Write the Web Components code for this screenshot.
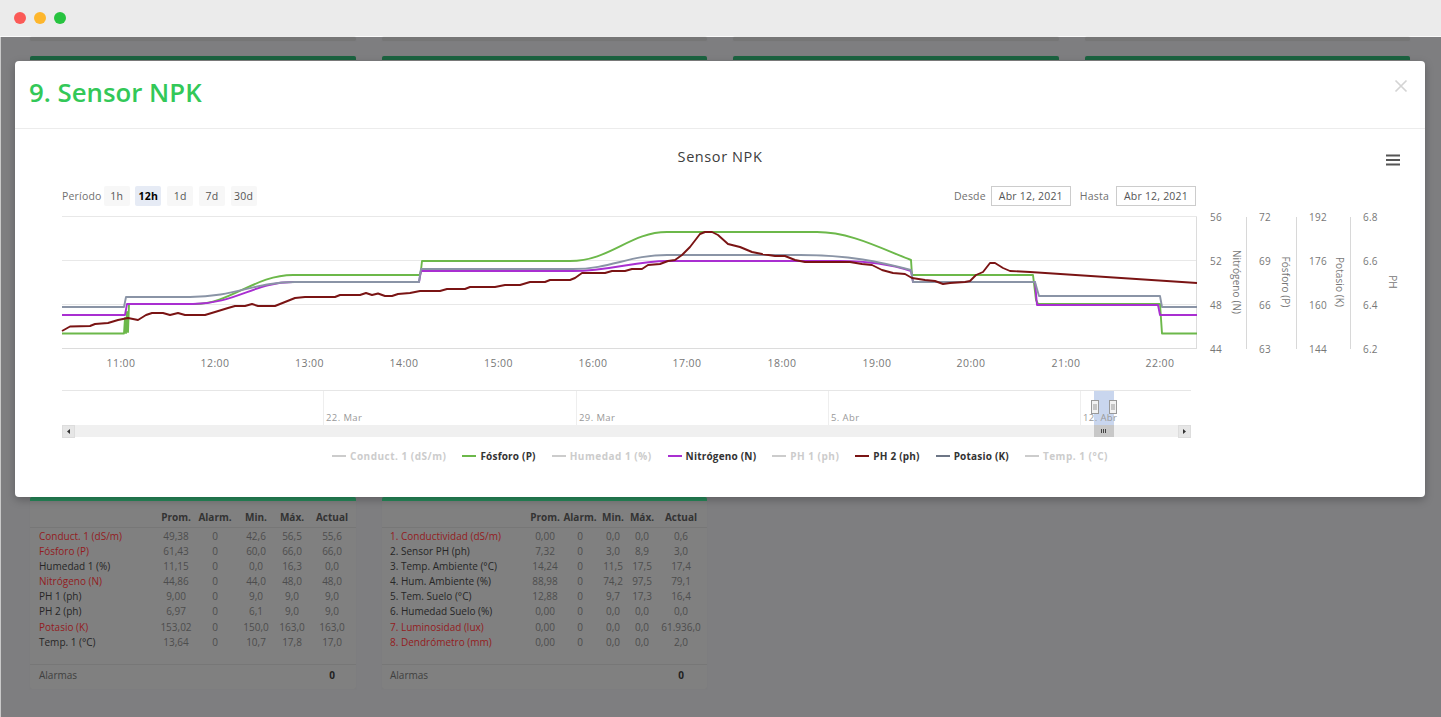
<!DOCTYPE html>
<html lang="es">
<head>
<meta charset="utf-8">
<title>Sensor NPK</title>
<style>
  html,body{margin:0;height:100%;overflow:hidden;background:#7e7e80}
  body{font-family:"Open Sans",sans-serif;display:flex;flex-direction:column;height:717px;position:relative}
</style>
</head>
<body>
<browser-bar></browser-bar>
<dash-board>
  <dash-card class="stub"></dash-card><dash-card class="stub"></dash-card><dash-card class="stub"></dash-card><dash-card class="stub"></dash-card>
  <dash-card class="tall"></dash-card><dash-card class="tall"></dash-card><dash-card class="tall"></dash-card><dash-card class="tall"></dash-card>
  <dash-card><sensor-table id="t1"></sensor-table></dash-card>
  <dash-card><sensor-table id="t2"></sensor-table></dash-card>
</dash-board>
<npk-modal heading="9. Sensor NPK"><npk-chart></npk-chart></npk-modal>

<script>
(() => {
  class BrowserBar extends HTMLElement {
    constructor(){
      super();
      this.attachShadow({mode:'open'}).innerHTML = `
        <style>
          :host{display:flex;align-items:center;gap:8px;flex:none;box-sizing:border-box;height:37px;padding:0 14px 1px;background:#ebebeb;border-bottom:1px solid #fafafa}
          i{width:12px;height:12px;border-radius:50%}
        </style>
        <i style="background:#fb5a57"></i><i style="background:#fdb62c"></i><i style="background:#27c33f"></i>`;
    }
  }

  class DashBoard extends HTMLElement {
    constructor(){
      super();
      this.attachShadow({mode:'open'}).innerHTML = `
        <style>
          :host{display:grid;flex:1;box-sizing:border-box;padding-left:29px;border-left:1px solid #c9c9c9;
            grid-template-columns:326px 325px 326px 325px;grid-template-rows:4px 426px auto;column-gap:26px;row-gap:15px;align-content:start;background:#7e7e80}
        </style>
        <slot></slot>`;
    }
  }

  class DashCard extends HTMLElement {
    constructor(){
      super();
      this.attachShadow({mode:'open'}).innerHTML = `
        <style>
          :host{display:block;box-sizing:border-box;height:192px;background:#808080;border-top:4px solid #27895a;border-radius:2px;box-shadow:0 0 1px #777}
          :host(.tall){height:auto;border-top-color:#1b6340}
          :host(.stub){height:auto;border-top:0;background:#767676}
        </style>
        <slot></slot>`;
    }
  }

  class SensorTable extends HTMLElement {
    set data(d){
      const head = ['','Prom.','Alarm.','Min.','Máx.','Actual'];
      const row = (cells) => cells.map((c,i) => `<span class="${i ? 'n' : 'name'}">${c}</span>`).join('');
      this.attachShadow({mode:'open'}).innerHTML = `
        <style>
          :host{display:flex;flex-direction:column;height:100%;font:10px/15.1px "Open Sans",sans-serif;color:#4d4d4d}
          .grid{display:grid;grid-template-columns:${d.cols};padding-left:${d.pad}px;align-items:center}
          .head{box-sizing:border-box;height:27px;padding-top:8px;border-bottom:1px solid #777;font-weight:700;color:#333}
          .rows{box-sizing:border-box;padding-top:1px;border-bottom:1px solid #777;height:137px;align-content:start}
          .n{text-align:center}
          .name{color:#262626;white-space:nowrap}
          .red{color:#931c20}
          .foot{display:flex;padding-left:${d.pad}px;height:21px;align-items:center;justify-content:space-between;color:#3f3f3f}
          .foot b{color:#222;width:${d.last}px;text-align:center}
        </style>
        <div class="grid head">${head.map((c,i) => `<span class="${i ? 'n' : ''}">${c}</span>`).join('')}</div>
        <div class="grid rows">${d.rows.map(r => {
          const red = r[0].startsWith('*');
          const cells = [red ? `<span class="red">${r[0].slice(1)}</span>` : r[0], ...r.slice(1)];
          return row(cells);
        }).join('')}</div>
        <div class="foot"><span>Alarmas</span><b>0</b></div>`;
    }
  }

  class NpkModal extends HTMLElement {
    constructor(){
      super();
      this.attachShadow({mode:'open'}).innerHTML = `
        <style>
          :host{position:absolute;left:15px;top:61px;width:1410px;height:436px;background:#fff;border-radius:4px;box-shadow:0 3px 9px rgba(0,0,0,.25);display:flex;flex-direction:column}
          header{display:flex;justify-content:space-between;box-sizing:border-box;height:68px;padding:0 17px 0 14px;border-bottom:1px solid #ececec;flex:none}
          h1{margin:0;font:600 25.8px/62px "Open Sans",sans-serif;color:#33c858}
          button{all:unset;display:block;height:14px;margin-top:18px}
          svg{display:block}
        </style>
        <header>
          <h1></h1>
          <button aria-label="Cerrar"><svg width="14" height="14" viewBox="0 0 14 14"><path d="M1.5 1.5l11 11M12.5 1.5l-11 11" stroke="#d4d4d4" stroke-width="1.7"/></svg></button>
        </header>
        <slot></slot>`;
      this.shadowRoot.querySelector('h1').textContent = this.getAttribute('heading');
    }
  }

  // puntos de PH 2, en coordenadas de pagina
  const PH2 = [[62,331],[70,326.5],[90,326],[95,324],[108,323],[118,320],[128,318],[138,320],[146,315],[152,313],[163,313],[170,315],[178,313],[185,315],[205,315],[215,312],[228,308],[235,306],[245,306],[252,304],[258,306],[275,306],[285,302],[295,298],[305,297],[335,297],[340,295],[360,295],[366,293],[372,295],[378,293.5],[385,296],[392,296],[398,294],[410,293],[420,291],[440,291],[447,289],[465,289],[470,287],[495,287],[505,285],[520,285],[530,282],[545,282],[550,280],[570,280],[575,278],[582,273],[605,273],[612,271],[625,271],[632,269],[642,269],[648,265],[660,264],[668,261],[675,260],[682,255],[690,247],[700,234],[705,232],[712,232],[718,235],[728,244],[740,247],[752,252],[762,254],[775,256],[785,256],[795,260],[805,262],[850,262],[862,264],[872,265],[882,270],[893,273],[905,274],[912,278],[925,280],[935,281],[943,284],[950,283],[965,282],[970,281],[976,275],[983,272],[990,263],[995,263],[1003,268],[1010,271],[1030,272],[1197,283]];

  const SERIES = [
    {c:'#6cb84a', d:'M62 333.5H122L124 333.5 125 318 126 333 127 312 128 332 129 304H195C230 304 255 275 293 275H420L421 270 422 261H570C610 261 630 232 667 232H817C850 232 880 248 911 260L912 275H1033L1036 300 1038 304H1160L1162 333.5H1197'},
    {c:'#a92fd1', d:'M62 315H125L127 304H193C235 304 255 282 293 282H419L421 271H573C610 271 635 261 667 261H840C870 261 890 264 911 271L913 282H1035L1037 305H1158L1160 315H1197'},
    {c:'#8a94a6', d:'M62 307H124L126 297H190C235 297 255 282 295 282H419L421 269H573C610 269 630 255 667 255H800C850 255 880 262 911 270L913 282H1035L1039 296H1160L1162 307H1197'},
    {c:'#7a1414', d:'M' + PH2.map(p => p.join(' ')).join('L')}
  ];

  const HOURS = [[121,'11:00'],[215,'12:00'],[309.5,'13:00'],[404,'14:00'],[498.5,'15:00'],[593,'16:00'],[687,'17:00'],[782,'18:00'],[877,'19:00'],[971,'20:00'],[1066,'21:00'],[1160,'22:00']];
  const GRID_Y = [217,261,305,349];
  const AXES = [
    {x:1210, line:1246.5, title:'Nitrógeno (N)', tx:1233, v:['56','52','48','44']},
    {x:1259, line:1296.5, title:'Fósforo (P)', tx:1282, v:['72','69','66','63']},
    {x:1309, line:1350.5, title:'Potasio (K)', tx:1336, v:['192','176','160','144']},
    {x:1363, line:null, title:'PH', tx:1389, v:['6.8','6.6','6.4','6.2']}
  ];
  const LEGEND = [
    ['Conduct. 1 (dS/m)',null],['Fósforo (P)','#6cb84a'],['Humedad 1 (%)',null],['Nitrógeno (N)','#a92fd1'],
    ['PH 1 (ph)',null],['PH 2 (ph)','#7a1414'],['Potasio (K)','#6d7686'],['Temp. 1 (°C)',null]
  ];

  class NpkChart extends HTMLElement {
    constructor(){
      super();
      this.attachShadow({mode:'open'}).innerHTML = `
        <style>
          :host{display:block;position:relative;font-family:"Open Sans",sans-serif;color:#707070;letter-spacing:.2px}
          svg{display:block}
          h2{margin:0;padding-top:18px;height:39px;text-align:center;font:400 14.5px/20px "Open Sans",sans-serif;letter-spacing:.6px;color:#3d3d3d}
          .menu{position:absolute;right:25px;top:25px}
          .tools{display:flex;align-items:center;height:20px;padding:0 229px 0 47px;font-size:10.5px;line-height:20px}
          .tools .lbl{margin-right:2px}
          .btn{box-sizing:border-box;width:26px;height:20px;margin-right:5.75px;background:#f7f7f7;text-align:center;color:#555;border-radius:2px}
          .btn.on{background:#e6ebf5;color:#000;font-weight:700}
          .sp{flex:1}
          .date{box-sizing:border-box;width:80px;height:20px;line-height:18px;border:1px solid #ccc;margin-left:3px;text-align:center;color:#555}
          .date + .lbl{margin-left:9px;margin-right:4px}
          text{font-family:"Open Sans",sans-serif;font-size:10.5px;letter-spacing:.4px;fill:#777}
          .val{font-size:10px;letter-spacing:.25px}
          .ttl{font-size:10px;letter-spacing:.1px}
          .plot{margin-top:4px}
          .nav{margin-top:16px}
          .nav text{font-size:9.5px;fill:#999}
          .legend{display:flex;justify-content:center;gap:16px;margin-top:8px;height:16px;font-size:10px;line-height:16px;font-weight:700;letter-spacing:.2px;color:#333}
          .legend span{display:flex;align-items:center;gap:4px;white-space:nowrap}
          .legend i{width:14px;height:2px;background:currentColor}
          .legend .off{color:#ccc;letter-spacing:.5px}
        </style>
        <h2>Sensor NPK</h2>
        <svg class="menu" width="14" height="12" viewBox="0 0 14 12"><path d="M0 1.5h14M0 6h14M0 10.5h14" stroke="#555" stroke-width="2"/></svg>
        <div class="tools">
          <span class="lbl">Período</span>
          <span class="btn">1h</span><span class="btn on">12h</span><span class="btn">1d</span><span class="btn">7d</span><span class="btn">30d</span>
          <span class="sp"></span>
          <span class="lbl">Desde</span><span class="date">Abr 12, 2021</span>
          <span class="lbl">Hasta</span><span class="date">Abr 12, 2021</span>
        </div>
        <svg class="plot" width="1410" height="162" viewBox="15 210 1410 162">
          <g stroke="#e8e8e8">${GRID_Y.slice(0,3).map(y => `<path d="M62 ${y-.5}H1197"/>`).join('')}</g>
          <path d="M62 348.5H1197M1196.5 217V349" stroke="#dcdcdc" fill="none"/>
          <g fill="none" stroke-width="1.9" stroke-linejoin="round">${SERIES.map(s => `<path stroke="${s.c}" d="${s.d}"/>`).join('')}</g>
          ${HOURS.map(([x,t]) => `<text x="${x}" y="367" text-anchor="middle">${t}</text>`).join('')}
          ${AXES.map(a => `
            ${a.v.map((v,i) => `<text class="val" x="${a.x}" y="${GRID_Y[i]+4}">${v}</text>`).join('')}
            ${a.line ? `<path d="M${a.line} 217V349" stroke="#d8d8d8"/>` : ''}
            <text class="ttl" transform="translate(${a.tx} 282) rotate(90)" text-anchor="middle">${a.title}</text>`).join('')}
        </svg>
        <svg class="nav" width="1410" height="52" viewBox="15 388 1410 52">
          <path d="M62 390.5H1191" stroke="#e6e6e6"/>
          <path d="M323.5 391V425M576.5 391V425M828.5 391V425M1080.5 391V425" stroke="#eee"/>
          <rect x="1094" y="391" width="20" height="34" fill="#c9d6ee"/>
          <text x="326" y="421">22. Mar</text><text x="579" y="421">29. Mar</text><text x="831" y="421">5. Abr</text><text x="1083" y="421">12. Abr</text>
          <rect x="62" y="425" width="1129" height="12" fill="#f0f0f0"/>
          <rect x="62.5" y="425.5" width="12" height="12" fill="#e6e6e6" stroke="#ddd"/><path d="M70 429v5l-3-2.5z" fill="#333"/>
          <rect x="1178.5" y="425.5" width="12" height="12" fill="#e6e6e6" stroke="#ddd"/><path d="M1183 429v5l3-2.5z" fill="#333"/>
          <rect x="1094" y="425" width="20" height="12" fill="#c8c8c8"/>
          <path d="M1101.5 429v4M1103.5 429v4M1105.5 429v4" stroke="#444"/>
          <g fill="#f2f2f2" stroke="#999"><rect x="1091.5" y="400.5" width="7" height="13"/><rect x="1109.5" y="400.5" width="7" height="13"/></g>
          <path d="M1094 404v6M1096 404v6M1112 404v6M1114 404v6" stroke="#999"/>
        </svg>
        <div class="legend">${LEGEND.map(([t,c]) => `<span class="${c ? '' : 'off'}"><i style="${c ? 'color:'+c : ''}"></i>${t}</span>`).join('')}</div>`;
    }
  }

  customElements.define('browser-bar', BrowserBar);
  customElements.define('dash-board', DashBoard);
  customElements.define('dash-card', DashCard);
  customElements.define('sensor-table', SensorTable);
  customElements.define('npk-modal', NpkModal);
  customElements.define('npk-chart', NpkChart);

  document.getElementById('t1').data = {
    cols:'119px 36px 42px 40px 32px 48px', pad:9, last:48,
    rows:[
      ['*Conduct. 1 (dS/m)','49,38','0','42,6','56,5','55,6'],
      ['*Fósforo (P)','61,43','0','60,0','66,0','66,0'],
      ['Humedad 1 (%)','11,15','0','0,0','16,3','0,0'],
      ['*Nitrógeno (N)','44,86','0','44,0','48,0','48,0'],
      ['PH 1 (ph)','9,00','0','9,0','9,0','9,0'],
      ['PH 2 (ph)','6,97','0','6,1','9,0','9,0'],
      ['*Potasio (K)','153,02','0','150,0','163,0','163,0'],
      ['Temp. 1 (°C)','13,64','0','10,7','17,8','17,0']
    ]
  };
  document.getElementById('t2').data = {
    cols:'137px 36px 34px 32px 26px 52px', pad:8, last:52,
    rows:[
      ['*1. Conductividad (dS/m)','0,00','0','0,0','0,0','0,6'],
      ['2. Sensor PH (ph)','7,32','0','3,0','8,9','3,0'],
      ['3. Temp. Ambiente (°C)','14,24','0','11,5','17,5','17,4'],
      ['4. Hum. Ambiente (%)','88,98','0','74,2','97,5','79,1'],
      ['5. Tem. Suelo (°C)','12,88','0','9,7','17,3','16,4'],
      ['6. Humedad Suelo (%)','0,00','0','0,0','0,0','0,0'],
      ['*7. Luminosidad (lux)','0,00','0','0,0','0,0','61.936,0'],
      ['*8. Dendrómetro (mm)','0,00','0','0,0','0,0','2,0']
    ]
  };
})();
</script>
</body>
</html>
